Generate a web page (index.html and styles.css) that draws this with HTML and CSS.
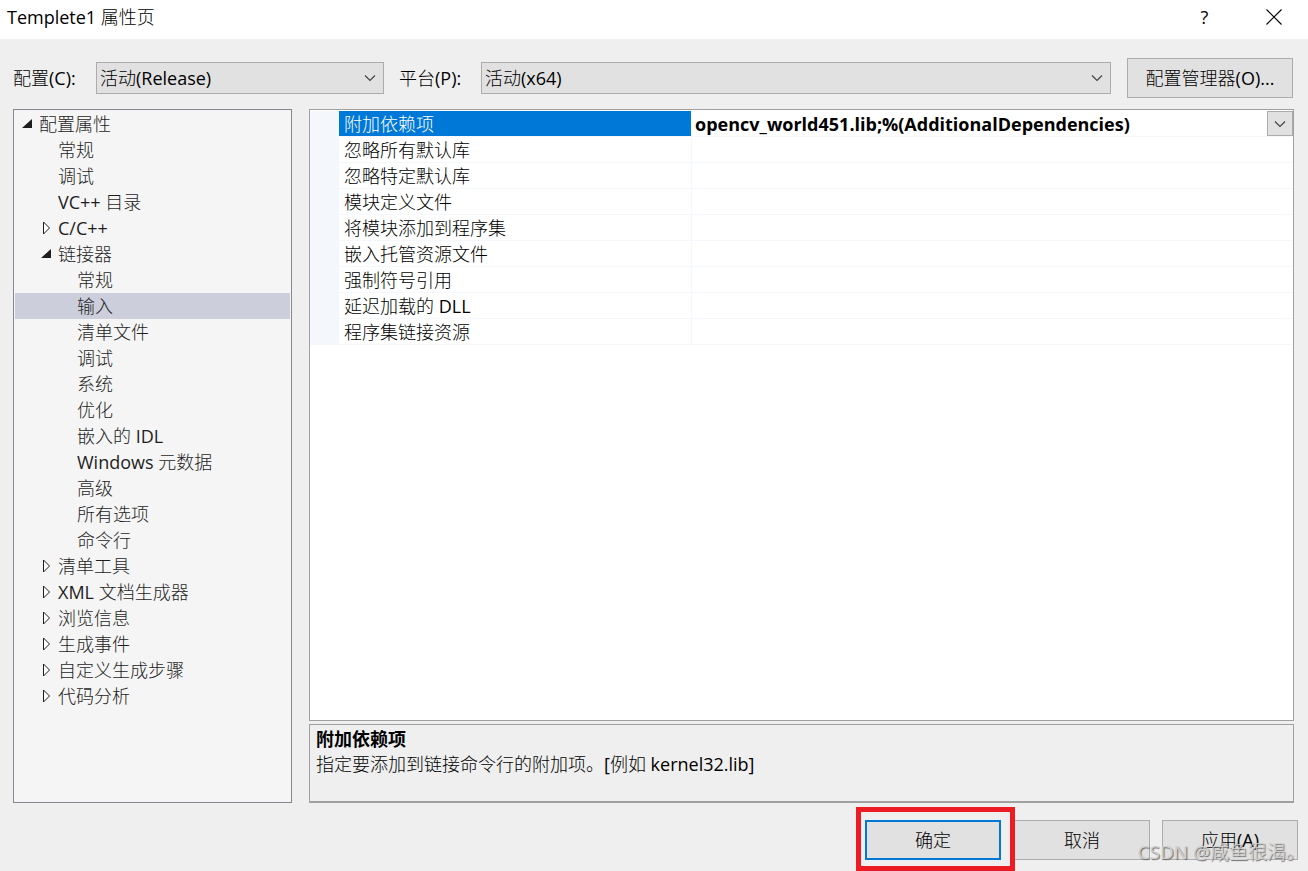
FILE: index.html
```html
<!DOCTYPE html>
<html lang="zh-CN">
<head>
<meta charset="utf-8">
<title>Templete1 属性页</title>
<link rel="stylesheet" href="styles.css">
</head>
<body>
<div class="dialog">
  <header class="titlebar">
    <h1 class="title">Templete1 属性页</h1>
    <button class="title-button" type="button" aria-label="帮助">?</button>
    <button class="title-button" type="button" aria-label="关闭">
      <svg width="16" height="16" viewBox="0 0 16 16"><path d="M.5.5l15 15M15.500.5l-15 15" fill="none" stroke="#000" stroke-width="1.1"/></svg>
    </button>
  </header>

  <div class="toolbar">
    <label class="label" for="config">配置(C):</label>
    <div class="combo combo-config">
      <select id="config" class="select"><option>活动(Release)</option></select>
      <svg class="chevron" width="12" height="8" viewBox="0 0 12 8"><path d="M1 1.500l5 5 5-5" fill="none" stroke="#444" stroke-width="1.200"/></svg>
    </div>
    <label class="label label-platform" for="platform">平台(P):</label>
    <div class="combo combo-platform">
      <select id="platform" class="select"><option>活动(x64)</option></select>
      <svg class="chevron" width="12" height="8" viewBox="0 0 12 8"><path d="M1 1.500l5 5 5-5" fill="none" stroke="#444" stroke-width="1.200"/></svg>
    </div>
    <button class="button manager" type="button">配置管理器(O)...</button>
  </div>

  <main class="panels">
    <nav class="tree-panel" aria-label="配置属性">
      <ul class="tree" role="tree">
        <li role="treeitem" aria-expanded="true">
          <div class="node"><svg class="arrow" viewBox="0 0 12 14"><path d="M11 2v9H1z" fill="#1e1e1e"/></svg>配置属性</div>
          <ul class="branch" role="group">
            <li class="node" role="treeitem"><span class="arrow"></span>常规</li>
            <li class="node" role="treeitem"><span class="arrow"></span>调试</li>
            <li class="node" role="treeitem"><span class="arrow"></span>VC++ 目录</li>
            <li class="node" role="treeitem" aria-expanded="false"><svg class="arrow" viewBox="0 0 12 14"><path d="M3.500 1v12l6-6z" fill="#fff" stroke="#1e1e1e"/></svg>C/C++</li>
            <li role="treeitem" aria-expanded="true">
              <div class="node"><svg class="arrow" viewBox="0 0 12 14"><path d="M11 2v9H1z" fill="#1e1e1e"/></svg>链接器</div>
              <ul class="branch" role="group">
                <li class="node" role="treeitem"><span class="arrow"></span>常规</li>
                <li class="node selected" role="treeitem" aria-selected="true"><span class="arrow"></span>输入</li>
                <li class="node" role="treeitem"><span class="arrow"></span>清单文件</li>
                <li class="node" role="treeitem"><span class="arrow"></span>调试</li>
                <li class="node" role="treeitem"><span class="arrow"></span>系统</li>
                <li class="node" role="treeitem"><span class="arrow"></span>优化</li>
                <li class="node" role="treeitem"><span class="arrow"></span>嵌入的 IDL</li>
                <li class="node" role="treeitem"><span class="arrow"></span>Windows 元数据</li>
                <li class="node" role="treeitem"><span class="arrow"></span>高级</li>
                <li class="node" role="treeitem"><span class="arrow"></span>所有选项</li>
                <li class="node" role="treeitem"><span class="arrow"></span>命令行</li>
              </ul>
            </li>
            <li class="node" role="treeitem" aria-expanded="false"><svg class="arrow" viewBox="0 0 12 14"><path d="M3.500 1v12l6-6z" fill="#fff" stroke="#1e1e1e"/></svg>清单工具</li>
            <li class="node" role="treeitem" aria-expanded="false"><svg class="arrow" viewBox="0 0 12 14"><path d="M3.500 1v12l6-6z" fill="#fff" stroke="#1e1e1e"/></svg>XML 文档生成器</li>
            <li class="node" role="treeitem" aria-expanded="false"><svg class="arrow" viewBox="0 0 12 14"><path d="M3.500 1v12l6-6z" fill="#fff" stroke="#1e1e1e"/></svg>浏览信息</li>
            <li class="node" role="treeitem" aria-expanded="false"><svg class="arrow" viewBox="0 0 12 14"><path d="M3.500 1v12l6-6z" fill="#fff" stroke="#1e1e1e"/></svg>生成事件</li>
            <li class="node" role="treeitem" aria-expanded="false"><svg class="arrow" viewBox="0 0 12 14"><path d="M3.500 1v12l6-6z" fill="#fff" stroke="#1e1e1e"/></svg>自定义生成步骤</li>
            <li class="node" role="treeitem" aria-expanded="false"><svg class="arrow" viewBox="0 0 12 14"><path d="M3.500 1v12l6-6z" fill="#fff" stroke="#1e1e1e"/></svg>代码分析</li>
          </ul>
        </li>
      </ul>
    </nav>

    <div class="details">
      <section class="grid-panel">
        <table class="grid">
          <colgroup><col class="col-gutter"><col class="col-name"><col></colgroup>
          <tbody>
            <tr class="current">
              <td class="gutter"></td><th class="name" scope="row">附加依赖项</th>
              <td class="value">
                <div class="editor">
                  <span class="editor-text">opencv_world451.lib;%(AdditionalDependencies)</span>
                  <button class="drop" type="button" aria-label="展开"><svg width="12" height="8" viewBox="0 0 12 8"><path d="M1 1.500l5 5 5-5" fill="none" stroke="#444" stroke-width="1.200"/></svg></button>
                </div>
              </td>
            </tr>
            <tr><td class="gutter"></td><th class="name" scope="row">忽略所有默认库</th><td class="value"></td></tr>
            <tr><td class="gutter"></td><th class="name" scope="row">忽略特定默认库</th><td class="value"></td></tr>
            <tr><td class="gutter"></td><th class="name" scope="row">模块定义文件</th><td class="value"></td></tr>
            <tr><td class="gutter"></td><th class="name" scope="row">将模块添加到程序集</th><td class="value"></td></tr>
            <tr><td class="gutter"></td><th class="name" scope="row">嵌入托管资源文件</th><td class="value"></td></tr>
            <tr><td class="gutter"></td><th class="name" scope="row">强制符号引用</th><td class="value"></td></tr>
            <tr><td class="gutter"></td><th class="name" scope="row">延迟加载的 DLL</th><td class="value"></td></tr>
            <tr><td class="gutter"></td><th class="name" scope="row">程序集链接资源</th><td class="value"></td></tr>
          </tbody>
        </table>
      </section>
      <section class="help">
        <h2 class="help-title">附加依赖项</h2>
        <p class="help-text">指定要添加到链接命令行的附加项。[例如 kernel32.lib]</p>
      </section>
    </div>
  </main>

  <footer class="actions">
    <div class="marked"><button class="button action primary" type="button">确定</button></div>
    <button class="button action" type="button">取消</button>
    <button class="button action" type="button">应用(A)</button>
    <span class="watermark">CSDN @咸鱼很渴。</span>
  </footer>
</div>
</body>
</html>
```

FILE: styles.css
```css
* { box-sizing: border-box; }

body {
  margin: 0;
  background: #efefef;
  color: #000;
  font: 18px/26px "Open Sans", "Noto Sans CJK SC Light", "Noto Sans CJK SC", sans-serif;
}

button, select { font: inherit; color: inherit; }

ul { margin: 0; padding: 0; list-style: none; }

.dialog {
  display: flex;
  flex-direction: column;
  min-height: 100vh;
}

.titlebar {
  display: flex;
  align-items: center;
  height: 39px;
  padding: 0 0 6px 7px;
  background: #fff;
}

.title {
  flex: 1;
  margin: 0;
  font-size: 18px;
  font-weight: 400;
}

.title-button {
  display: flex;
  align-items: center;
  justify-content: center;
  width: 69px;
  height: 32px;
  padding: 0;
  border: 0;
  background: none;
}

.toolbar {
  display: flex;
  align-items: center;
  padding: 19px 15px 11px 13px;
}

.label { width: 83px; white-space: nowrap; }
.label-platform { width: 82px; margin-left: 15px; }

.combo { position: relative; }
.combo-config { width: 288px; }
.combo-platform { flex: 1; }

.select {
  display: block;
  width: 100%;
  height: 32px;
  padding: 0 32px 0 3px;
  border: 1px solid #acacac;
  border-radius: 0;
  background: #e1e1e1;
  appearance: none;
}

.chevron {
  position: absolute;
  top: 12px;
  right: 8px;
  pointer-events: none;
}

.button {
  height: 40px;
  padding: 0;
  border: 1px solid #acacac;
  border-radius: 0;
  background: #e1e1e1;
}

.manager { width: 166px; margin-left: 16px; }

.panels {
  flex: 1;
  display: flex;
  gap: 17px;
  padding: 0 14px 0 13px;
}

.tree-panel {
  width: 279px;
  padding: 1px;
  border: 1px solid #828790;
  background: #f5f5f5;
  color: #1e1e1e;
}

.node {
  display: flex;
  align-items: center;
  height: 26px;
  padding-left: 6px;
}

.branch .node { padding-left: 25px; }
.branch .branch .node { padding-left: 44px; }

.arrow {
  width: 12px;
  height: 14px;
  margin-right: 6px;
}

.selected { background: #cccedb; }

.details {
  flex: 1;
  display: flex;
  flex-direction: column;
  gap: 3px;
}

.grid-panel {
  flex: 1;
  padding-top: 1px;
  border: 1px solid #a0a0a0;
  background: #fff;
}

.grid {
  width: 100%;
  table-layout: fixed;
  border-collapse: separate;
  border-spacing: 0;
}

.col-gutter { width: 29px; }
.col-name { width: 353px; }

.grid td, .grid th {
  height: 26px;
  padding: 0;
  border-bottom: 1px solid #f4f7fc;
  line-height: 23px;
}

.grid .gutter { background: #f4f7fc; }

.grid .name {
  padding: 2px 0 0 5px;
  border-right: 1px solid #f4f7fc;
  font-weight: 400;
  text-align: left;
}

.current .name {
  background: #0078d7;
  background-clip: padding-box;
  color: #fff;
}

.editor { display: flex; height: 25px; }

.editor-text {
  flex: 1;
  padding: 2px 0 0 3px;
  font-weight: 700;
}

.drop {
  display: flex;
  align-items: center;
  justify-content: center;
  width: 26px;
  height: 25px;
  padding: 0;
  border: 1px solid #acacac;
  background: #e1e1e1;
}

.help {
  height: 79px;
  padding: 2px 6px;
  border: 1px solid #a0a0a0;
  border-bottom-width: 2px;
}

.help-title, .help-text {
  margin: 0;
  font-size: 18px;
  line-height: 25px;
}

.help-title { font-family: "Open Sans", "Noto Sans CJK SC", sans-serif; }

.actions {
  position: relative;
  display: flex;
  justify-content: flex-end;
  gap: 12px;
  padding: 17px 10px 11px;
}

.action { width: 136px; }

.primary { border: 2px solid #0078d7; }

.marked { position: relative; margin-right: 1px; }

/* Highlight frame drawn round the confirm button */
.marked::after {
  content: "";
  position: absolute;
  inset: -13px -14px -11px -9px;
  z-index: 1;
  border: 5px solid #ed1c24;
  pointer-events: none;
}

.watermark {
  position: absolute;
  right: 3px;
  bottom: 6px;
  z-index: 2;
  color: #d0d0d0;
  text-shadow: 1px 1px 1px #666;
  font-size: 19px;
  white-space: nowrap;
  pointer-events: none;
}
```
